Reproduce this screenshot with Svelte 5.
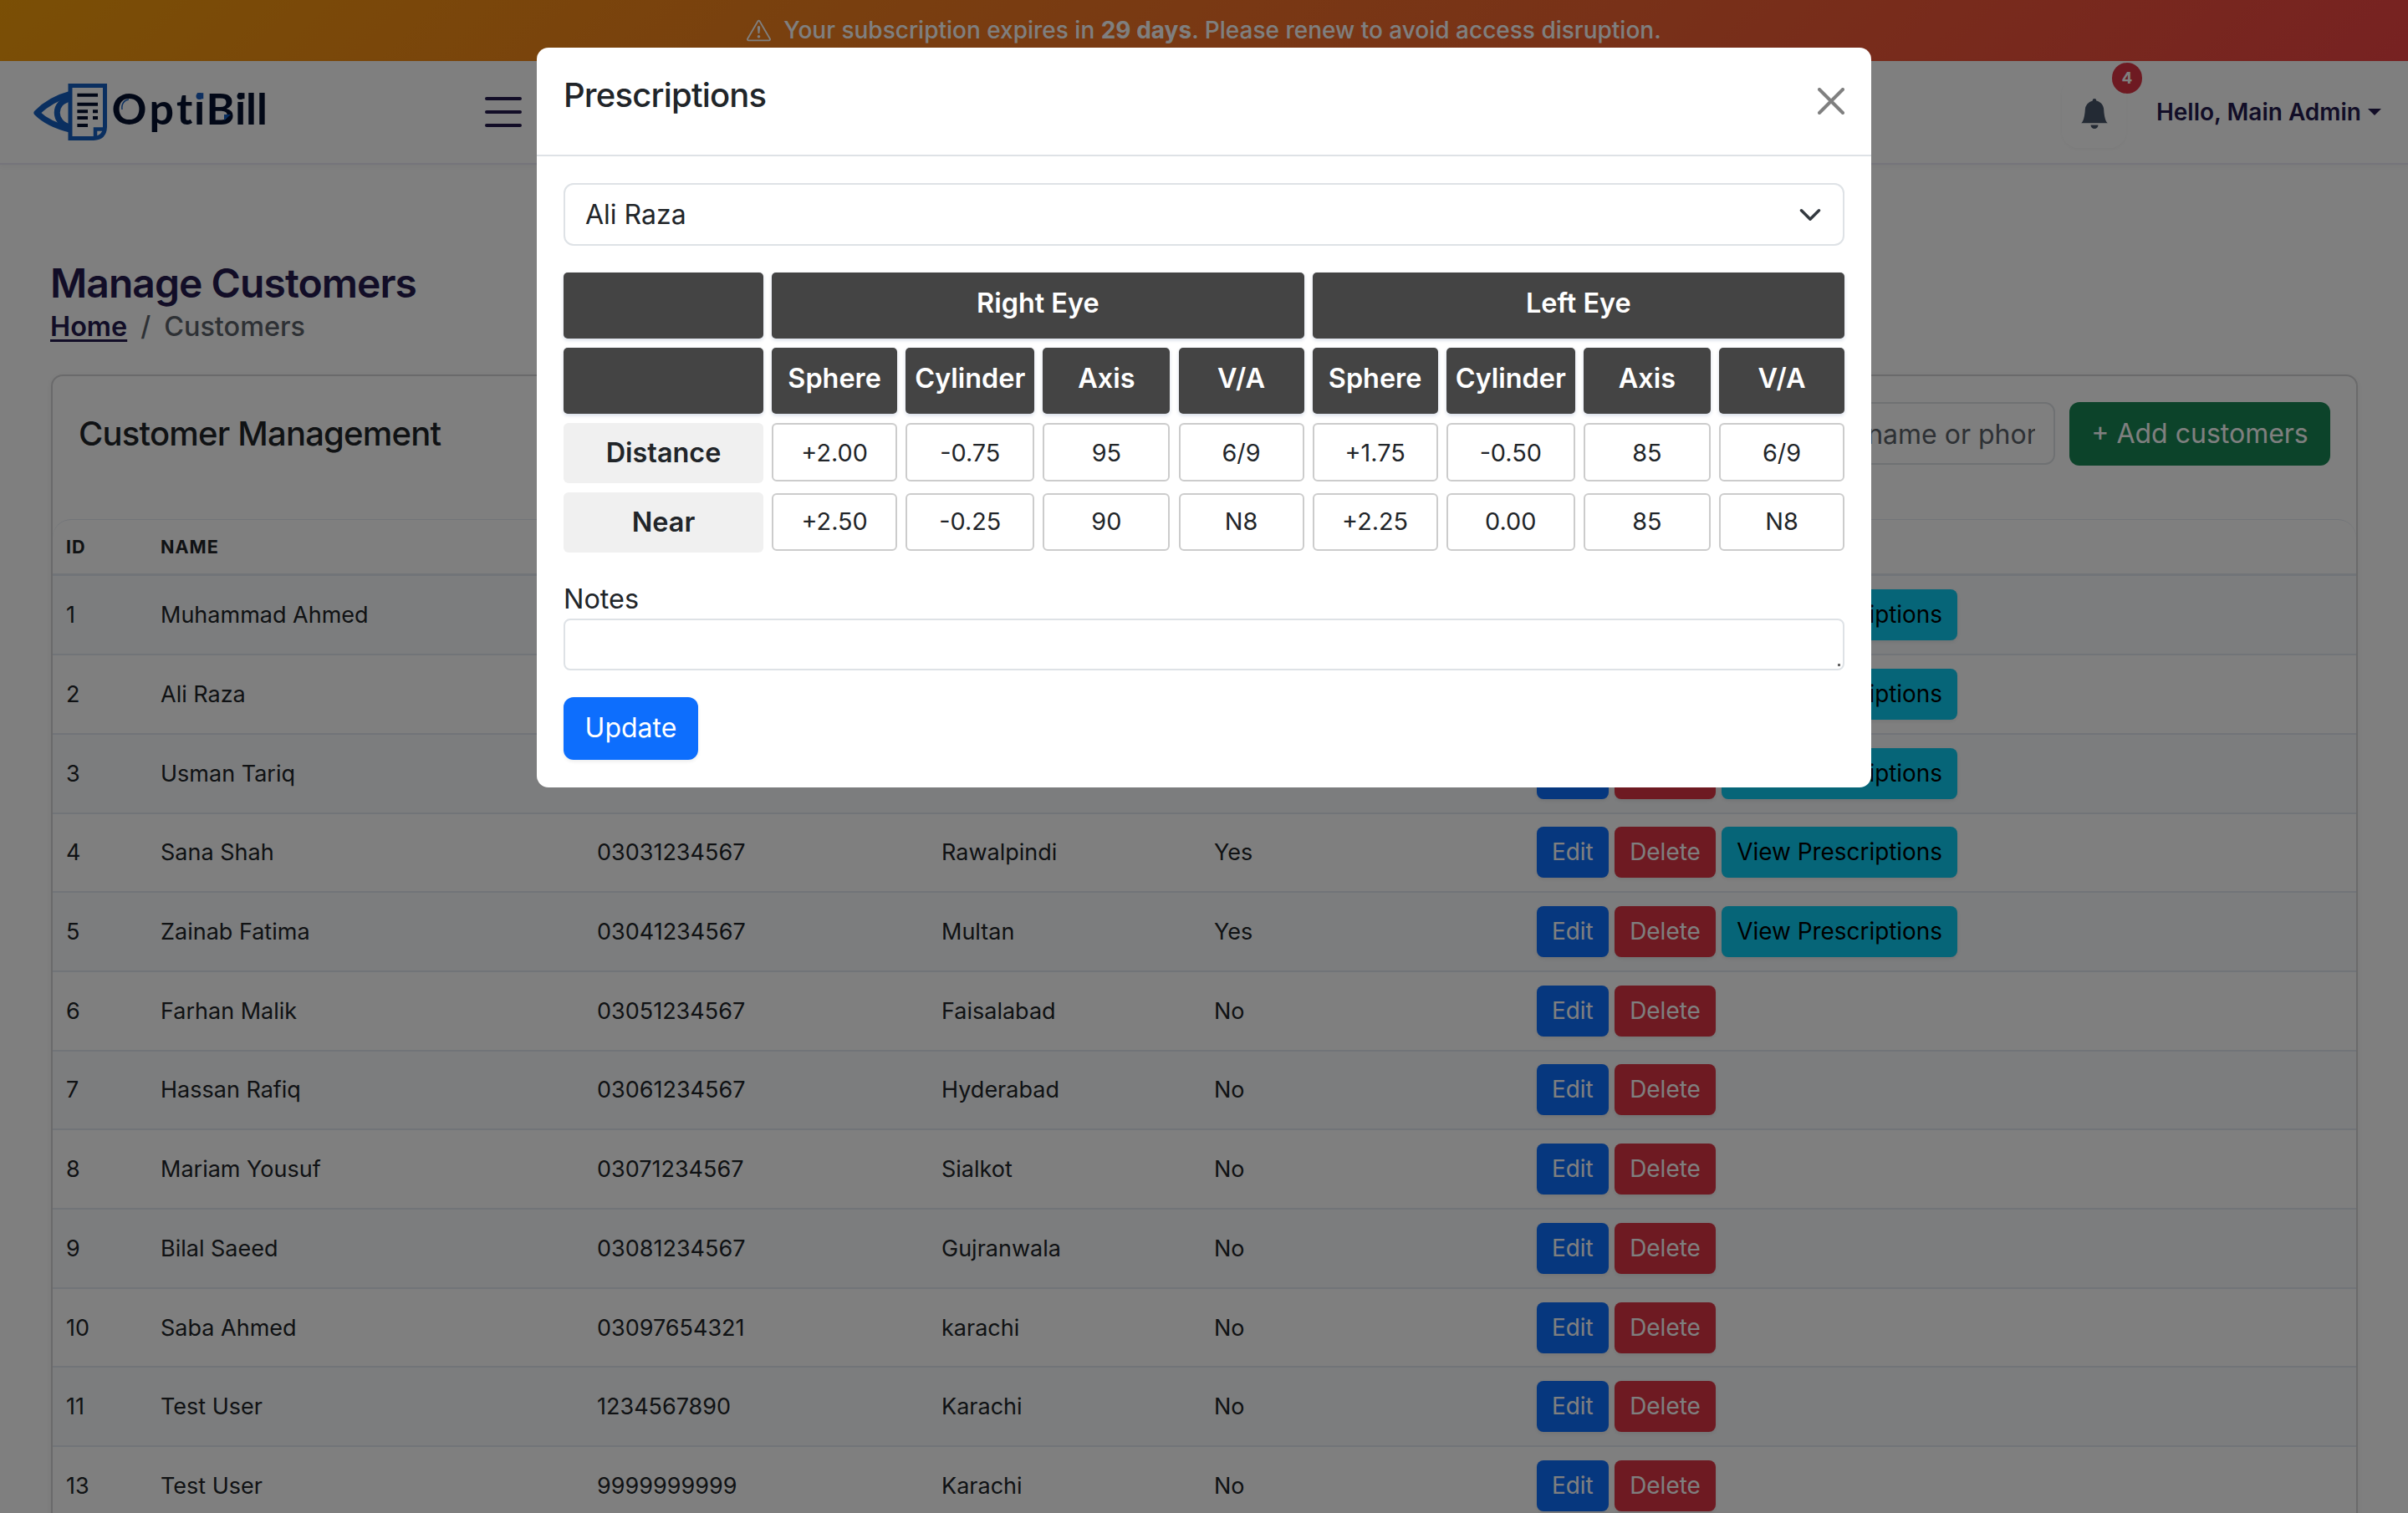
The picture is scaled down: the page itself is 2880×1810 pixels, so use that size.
<script>
  const customers = [
    [1, 'Muhammad Ahmed', '03001234567', 'Karachi', 'Yes'],
    [2, 'Ali Raza', '03011234567', 'Lahore', 'Yes'],
    [3, 'Usman Tariq', '03021234567', 'Islamabad', 'Yes'],
    [4, 'Sana Shah', '03031234567', 'Rawalpindi', 'Yes'],
    [5, 'Zainab Fatima', '03041234567', 'Multan', 'Yes'],
    [6, 'Farhan Malik', '03051234567', 'Faisalabad', 'No'],
    [7, 'Hassan Rafiq', '03061234567', 'Hyderabad', 'No'],
    [8, 'Mariam Yousuf', '03071234567', 'Sialkot', 'No'],
    [9, 'Bilal Saeed', '03081234567', 'Gujranwala', 'No'],
    [10, 'Saba Ahmed', '03097654321', 'karachi', 'No'],
    [11, 'Test User', '1234567890', 'Karachi', 'No'],
    [13, 'Test User', '9999999999', 'Karachi', 'No'],
  ];
  const measures = ['Sphere', 'Cylinder', 'Axis', 'V/A', 'Sphere', 'Cylinder', 'Axis', 'V/A'];
  const distance = ['+2.00', '-0.75', '95', '6/9', '+1.75', '-0.50', '85', '6/9'];
  const near = ['+2.50', '-0.25', '90', 'N8', '+2.25', '0.00', '85', 'N8'];
</script>

<div class="page">
  <div class="banner">
    <svg class="warn" viewBox="0 0 16 16" fill="currentColor">
      <path d="M7.938 2.016A.13.13 0 0 1 8.002 2a.13.13 0 0 1 .063.016.15.15 0 0 1 .054.057l6.857 11.667c.036.06.035.124.002.183a.2.2 0 0 1-.054.06.1.1 0 0 1-.066.017H1.146a.1.1 0 0 1-.066-.017.2.2 0 0 1-.054-.06.18.18 0 0 1 .002-.183L7.884 2.073a.15.15 0 0 1 .054-.057m1.044-.45a1.13 1.13 0 0 0-1.96 0L.165 13.233c-.457.778.091 1.767.98 1.767h13.713c.889 0 1.438-.99.98-1.767z" />
      <path d="M7.002 12a1 1 0 1 1 2 0 1 1 0 0 1-2 0M7.1 5.995a.905.905 0 1 1 1.8 0l-.35 3.507a.552.552 0 0 1-1.1 0z" />
    </svg>
    <span>Your subscription expires in <b>29 days</b>. Please renew to avoid access disruption.</span>
  </div>

  <header>
    <div class="brand">
      <svg class="logo" viewBox="0 0 280 68">
        <defs>
          <linearGradient id="dot" gradientUnits="userSpaceOnUse" x1="0" y1="0" x2="0" y2="40">
            <stop offset=".49" stop-color="#1a5fc0" /><stop offset=".49" stop-color="#04102f" />
          </linearGradient>
        </defs>
        <path d="M44 12.500C27 17 13 26 4 35C13 44 27 51 44 55" fill="none" stroke="#155fc0" stroke-width="7" stroke-linejoin="round" />
        <path d="M44 18C23 22 23 47 44 52" fill="none" stroke="#155fc0" stroke-width="7" />
        <path d="M44 2.500H85.500V52Q85 65 72 65.500H44Z" fill="#fff" stroke="#155fc0" stroke-width="5" />
        <path d="M74 66V54.500H86" fill="none" stroke="#155fc0" stroke-width="4.500" />
        <path d="M52.400 13.700H77M52.400 24.700H77M52.400 33.300H65M71 33.300H77M52.400 41H65M71 41H77M52.400 50H65" stroke="#04102f" stroke-width="4" />
        <text class="wordmark" y="48.500" x="93.500 138.500 171 192 206.500 241 254 267">Opt<tspan fill="url(#dot)">i</tspan>Bill</text>
        <path d="M195.800 11.200h7.500v7h-7.500z" fill="#1a5fc0" />
        <path d="M245 11.200h7.500v7H245z" fill="#04102f" />
        <path d="M228 37h8l-8 7z" fill="#155fc0" />
        <path d="M106 31C105 24 109 19.500 114 19" fill="none" stroke="#155fc0" stroke-width="1.500" />
      </svg>
    </div>
    <div class="burger"><span></span><span></span><span></span></div>
    <div class="account">
      <div class="bell">
        <svg viewBox="0 0 16 16" fill="#475569"><path d="M8 16a2 2 0 0 0 2-2H6a2 2 0 0 0 2 2m.995-14.901a1 1 0 1 0-1.99 0A5 5 0 0 0 3 6c0 1.098-.5 6-2 7h14c-1.500-1-2-5.902-2-7 0-2.420-1.720-4.440-4.005-4.901" /></svg>
        <span class="count">4</span>
      </div>
      <span class="hello">Hello, Main Admin</span>
      <span class="caret"></span>
    </div>
  </header>

  <main>
    <h1>Manage Customers</h1>
    <nav><a href="#home">Home</a><span class="sep">/</span><span>Customers</span></nav>

    <section class="card">
      <div class="card-head">
        <h2>Customer Management</h2>
        <div class="tools">
          <div class="search"><span>Search by name or phone...</span></div>
          <div class="add">+ Add customers</div>
        </div>
      </div>
      <div class="list">
        <div class="row head"><span>ID</span><span>Name</span><span>Phone</span><span>City</span><span>Prescription</span><span>Actions</span></div>
        {#each customers as [id, name, phone, city, has], i}
          <div class="row" class:odd={i % 2 === 0} class:first={i === 0}>
            <span>{id}</span><span>{name}</span><span>{phone}</span><span>{city}</span><span>{has}</span>
            <div class="actions">
              <div class="btn edit">Edit</div>
              <div class="btn delete">Delete</div>
              {#if has === 'Yes'}<div class="btn view">View Prescriptions</div>{/if}
            </div>
          </div>
        {/each}
      </div>
    </section>
  </main>
</div>

<div class="backdrop">
  <div class="modal">
    <div class="modal-head">
      <h2>Prescriptions</h2>
      <svg class="close" viewBox="0 0 16 16"><path d="M1 1L15 15M15 1L1 15" stroke="#808080" stroke-width="2" stroke-linecap="round" /></svg>
    </div>
    <div class="modal-body">
      <div class="select">
        <span>Ali Raza</span>
        <svg viewBox="0 0 16 16"><path d="m2 5 6 6 6-6" fill="none" stroke="#343a40" stroke-width="2" stroke-linecap="round" stroke-linejoin="round" /></svg>
      </div>
      <div class="grid">
        <div class="th"></div>
        <div class="th wide">Right Eye</div>
        <div class="th wide">Left Eye</div>
        <div class="th"></div>
        {#each measures as m}<div class="th">{m}</div>{/each}
        <div class="label">Distance</div>
        {#each distance as v}<div class="field">{v}</div>{/each}
        <div class="label">Near</div>
        {#each near as v}<div class="field near">{v}</div>{/each}
      </div>
      <div class="notes-label">Notes</div>
      <div class="notes"><i></i></div>
      <div class="update">Update</div>
    </div>
  </div>
</div>

<style>
  :global(body) { margin: 0; overflow: hidden; background: #fff; }
  :global(#app) { position: relative; width: 2880px; height: 1810px; overflow: hidden; }
  div, section, header, span, h1, h2 { box-sizing: border-box; }
  h1, h2 { margin: 0; }
  .page, .backdrop { font-family: Inter, "Liberation Sans", sans-serif; color: #212529; white-space: nowrap; }
  .page { width: 2880px; height: 1810px; overflow: hidden; background: #fefefe; }

  .banner {
    height: 73px; display: flex; align-items: center; justify-content: center; gap: 15px;
    background: linear-gradient(135deg, #f59e0b, #ef4444); color: #fff; font-size: 28px; line-height: 34px; font-weight: 500;
  }
  .banner span { margin-top: -1px; }
  .banner b { font-weight: 700; }
  .warn { width: 29px; height: 29px; }

  header {
    height: 124px; display: flex; align-items: center; padding: 0 32px 0 40px;
    background: #fff; border-bottom: 2px solid #ebe9f7; box-shadow: 0 2px 6px rgba(0, 0, 0, .04);
  }
  .brand { width: 540px; }
  .logo { display: block; width: 280px; height: 68px; overflow: visible; }
  .wordmark { font-family: Lato, sans-serif; font-weight: 700; font-size: 52px; fill: #04102f; }
  .burger { display: flex; flex-direction: column; gap: 12px; width: 44px; }
  .burger span { height: 4px; border-radius: 2px; background: #251b4e; }
  .account { margin-left: auto; display: flex; align-items: center; }
  .bell { position: relative; width: 77px; height: 85px; border-radius: 20px; display: flex; align-items: center; justify-content: center; box-shadow: 0 2px 4px rgba(0, 0, 0, .04); }
  .bell svg { width: 36px; height: 36px; margin: 3px 0 0 1px; }
  .count {
    position: absolute; left: 60px; top: -17px; width: 36px; height: 37px; border-radius: 18px; background: #dc3545;
    color: #fff; font-size: 19px; font-weight: 700; display: flex; align-items: center; justify-content: center;
  }
  .hello { margin-left: 36px; font-size: 28px; font-weight: 600; color: #251b4e; }
  .caret { margin-left: 8px; border: 8px solid transparent; border-top-color: #251b4e; border-bottom: 0; }

  main { padding: 113px 60px 0; }
  h1 { font-size: 48px; line-height: 58px; font-weight: 600; color: #251b4e; letter-spacing: -.95px; }
  nav { display: flex; font-size: 32.400px; line-height: 46px; font-weight: 500; color: #5c636a; }
  nav a { color: #251b4e; font-weight: 600; text-underline-offset: 4px; text-decoration-thickness: 3px; }
  .sep { margin: 0 16px; }

  .card { margin: 34px 0 0 1px; width: 2759px; border: 2px solid #d5d5d7; border-radius: 14px; background: #fff; box-shadow: 0 2px 6px rgba(0, 0, 0, .06); }
  .card-head { height: 171px; padding: 31px 31px 0; display: flex; justify-content: space-between; }
  .card-head h2 { font-size: 40px; font-weight: 500; line-height: 75px; letter-spacing: -.8px; }
  .tools { display: flex; gap: 17px; }
  .search { width: 412px; height: 75px; border: 2px solid #dee2e6; border-radius: 12px; padding: 0 22px 0 24px; font-size: 32px; line-height: 73px; color: #5c636a; }
  .search span { display: block; overflow: hidden; }
  .add { width: 312px; height: 76px; border-radius: 12px; background: #198754; color: #fff; font-size: 32px; line-height: 76px; text-align: center; }

  .list { border-top: 1.800px solid #e2e8f0; border-radius: 22px 22px 0 0; }
  .row {
    display: grid; grid-template-columns: 113px 522px 412px 326px 386px 1fr; align-items: center; padding-left: 16px;
    height: 94.700px; border-bottom: 2px solid #e2e8f0; font-size: 27px;
  }
  .row.odd { background: #f8fafc; }
  .row.first { height: 95.200px; }
  .row.head { height: 67px; border-bottom: 3px solid #e2e8f0; font-size: 21.600px; font-weight: 700; letter-spacing: 1px; text-transform: uppercase; }
  .actions { display: flex; gap: 7.500px; }
  .btn { height: 61px; padding: 0 18px; border-radius: 8px; color: #fff; font-size: 27.900px; line-height: 60px; box-shadow: 0 2px 4px rgba(0, 0, 0, .08); }
  .edit { background: #0d6efd; }
  .delete { background: #dc3545; }
  .view { background: #0dcaf0; color: #000; }

  .backdrop { position: absolute; inset: 0; background: rgba(0, 0, 0, .5); display: flex; justify-content: center; align-items: flex-start; }
  .modal { width: 1596px; height: 885px; margin-top: 57px; border-radius: 14px; background: #fff; }
  .modal-head { height: 130px; padding: 0 32px; display: flex; justify-content: space-between; border-bottom: 2px solid #dee2e6; }
  .modal-head h2 { font-size: 40px; font-weight: 500; line-height: 114px; letter-spacing: -.8px; }
  .close { width: 32px; height: 32px; margin-top: 48px; }
  .modal-body { padding: 32px; }
  .select {
    height: 75px; border: 2px solid #dee2e6; border-radius: 12px; padding: 0 25px 0 24px; font-size: 32px;
    display: flex; align-items: center; justify-content: space-between;
  }
  .select svg { width: 28px; height: 28px; }
  .grid {
    display: grid; margin-top: 32px; column-gap: 10px; text-align: center; font-size: 32.400px; font-weight: 600;
    grid-template-columns: 239px 150px 154px 152px 150px 150px 154px 152px 150px; grid-template-rows: 79px 79px 72px 72px; row-gap: 11px;
    justify-content: space-between;
  }
  .th { border-radius: 5px; background: #444; color: #fff; line-height: 73px; box-shadow: 0 2px 4px rgba(30, 60, 120, .18); }
  .wide { grid-column: span 4; }
  .label { border-radius: 6px; background: #f0f0f0; line-height: 72px; }
  .field { height: 70px; border: 2px solid #ccc; border-radius: 6px; font-size: 28.800px; font-weight: 400; line-height: 67px; }
  .near { height: 69px; margin-top: 1px; line-height: 64px; }
  .notes-label { margin-top: 37px; height: 42px; font-size: 32.400px; line-height: 38px; }
  .notes { position: relative; height: 62px; border: 2px solid #dee2e6; border-radius: 8px; }
  .notes i { position: absolute; right: 3px; bottom: 3px; width: 3px; height: 3px; background: #666; }
  .update { width: 161px; height: 75px; margin-top: 32px; border-radius: 12px; background: #0d6efd; color: #fff; font-size: 32px; line-height: 74px; text-align: center; box-shadow: 0 2px 4px rgba(0, 0, 0, .08); }
</style>
